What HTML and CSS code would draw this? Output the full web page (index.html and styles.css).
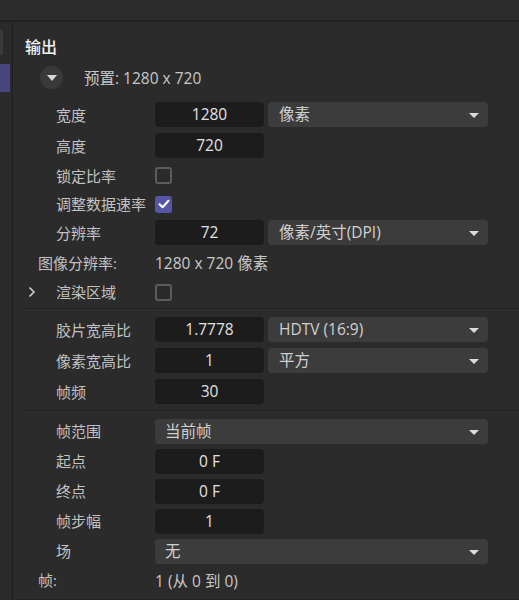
FILE: index.html
```html
<!DOCTYPE html>
<html lang="zh-CN">
<head>
<meta charset="utf-8">
<title>输出</title>
<link rel="stylesheet" href="styles.css">
</head>
<body>
<div class="app">
  <div class="topbar"></div>
  <div class="body">
    <aside class="rail">
      <div class="rail-tab"></div>
      <div class="rail-tab active"></div>
    </aside>
    <main class="panel">
      <h2 class="title">输出</h2>
      <div class="preset">
        <span class="disc"><svg width="10" height="6" viewBox="0 0 10 6"><path d="M0 0H10L5 6Z" fill="#d8d8d8"/></svg></span>
        <span class="preset-text">预置: 1280 x 720</span>
      </div>

      <div class="rows first">
        <div class="row h31"><span class="label">宽度</span><span class="field">1280</span><span class="select">像素<i class="caret"></i></span></div>
        <div class="row h31"><span class="label">高度</span><span class="field">720</span></div>
        <div class="row h29"><span class="label">锁定比率</span><span class="check"></span></div>
        <div class="row h28"><span class="label">调整数据速率</span><span class="check on"><svg width="12" height="10" viewBox="0 0 12 10"><path d="M1.5 5.2L4.6 8.2L10.5 1.8" fill="none" stroke="#fff" stroke-width="2" stroke-linecap="round" stroke-linejoin="round"/></svg></span></div>
        <div class="row h29"><span class="label">分辨率</span><span class="field">72</span><span class="select">像素/英寸(DPI)<i class="caret"></i></span></div>
        <div class="row h31 info"><span class="label">图像分辨率:</span><span class="value">1280 x 720 像素</span></div>
        <div class="row h28"><span class="label tree"><svg class="chev" width="8" height="12" viewBox="0 0 8 12"><path d="M1.5 1.5L6 6L1.5 10.5" fill="none" stroke="#cfcfcf" stroke-width="1.6"/></svg>渲染区域</span><span class="check"></span></div>
      </div>

      <div class="sep"></div>

      <div class="rows">
        <div class="row h31"><span class="label">胶片宽高比</span><span class="field">1.7778</span><span class="select">HDTV (16:9)<i class="caret"></i></span></div>
        <div class="row h31"><span class="label">像素宽高比</span><span class="field">1</span><span class="select">平方<i class="caret"></i></span></div>
        <div class="row h31"><span class="label">帧频</span><span class="field">30</span></div>
      </div>

      <div class="sep sep2"></div>

      <div class="rows">
        <div class="row h30"><span class="label">帧范围</span><span class="select wide">当前帧<i class="caret"></i></span></div>
        <div class="row h30"><span class="label">起点</span><span class="field">0 F</span></div>
        <div class="row h30"><span class="label">终点</span><span class="field">0 F</span></div>
        <div class="row h30"><span class="label">帧步幅</span><span class="field">1</span></div>
        <div class="row h30"><span class="label">场</span><span class="select wide">无<i class="caret"></i></span></div>
        <div class="row h28 info"><span class="label">帧:</span><span class="value">1 (从 0 到 0)</span></div>
      </div>
    </main>
  </div>
</div>
</body>
</html>
```

FILE: styles.css
```css
html, body {
  margin: 0;
  padding: 0;
  background: #2b2b2b;
}

body {
  font-family: "Open Sans", "Noto Sans CJK SC", sans-serif;
  font-size: 15px;
  color: #c4c4c4;
}

.app {
  width: 519px;
  height: 600px;
  display: flex;
  flex-direction: column;
  overflow: hidden;
}

.topbar {
  height: 20px;
  background: #2c2c2c;
  border-bottom: 2px solid #222222;
  flex: none;
}

.body {
  flex: 1;
  display: flex;
}

/* left tab rail */
.rail {
  width: 12px;
  border-right: 1px solid #1f1f1f;
  background: #2a2a2a;
  display: flex;
  flex-direction: column;
  padding-top: 8px;
  gap: 9px;
}

.rail-tab {
  width: 3px;
  height: 25px;
  background: #393939;
}

.rail-tab.active {
  width: 10px;
  height: 28px;
  background: #46467c;
}

.panel {
  flex: 1;
  display: flex;
  flex-direction: column;
  border-bottom: 1px solid #232323;
}

.title {
  margin: 15px 0 0 12px;
  font-size: 16px;
  line-height: 20px;
  font-weight: 500;
  color: #f2f2f2;
}

.preset {
  margin: 8px 0 0 27px;
  height: 24px;
  display: flex;
  align-items: center;
  gap: 21px;
}

.disc {
  width: 23px;
  height: 23px;
  border-radius: 50%;
  background: #393939;
  display: flex;
  align-items: center;
  justify-content: center;
}

.disc svg {
  margin-top: 1px;
}

.preset-text {
  color: #c8c8c8;
  font-size: 15.5px;
}

.rows {
  display: flex;
  flex-direction: column;
}

.rows.first {
  margin-top: 10px;
}

.row {
  display: grid;
  grid-template-columns: 138px 109px 220px;
  column-gap: 4px;
  align-items: center;
}

.h31 { height: 31px; }
.h30 { height: 30px; }
.h29 { height: 29px; }
.h28 { height: 28px; }

.label {
  padding-left: 43px;
  white-space: nowrap;
  color: #c2c2c2;
  line-height: 20px;
}

.label.tree {
  padding-left: 15px;
  display: flex;
  align-items: center;
}

.chev {
  width: 8px;
  margin-right: 20px;
}

.info .label {
  padding-left: 25px;
}

.value {
  grid-column: 2 / 4;
  color: #c8c8c8;
  white-space: nowrap;
  font-size: 15.5px;
}

.field {
  height: 25px;
  border-radius: 4px;
  background: #1c1c1c;
  color: #e2e2e2;
  text-align: center;
  line-height: 25px;
  font-size: 15.5px;
}

.select {
  position: relative;
  height: 25px;
  border-radius: 4px;
  background: #3c3c3c;
  color: #d0d0d0;
  line-height: 25px;
  padding-left: 11px;
  font-size: 15.5px;
}

.select.wide {
  grid-column: 2 / 4;
  padding-left: 10px;
}

.caret {
  position: absolute;
  right: 9px;
  top: 11px;
  width: 0;
  height: 0;
  border-left: 5px solid transparent;
  border-right: 5px solid transparent;
  border-top: 5px solid #dcdcdc;
}

.check {
  width: 13px;
  height: 13px;
  border: 2px solid #5c5c5c;
  border-radius: 3px;
}

.check.on {
  width: 17px;
  height: 17px;
  border: none;
  background: #5656a6;
  display: flex;
  align-items: center;
  justify-content: center;
}

.sep {
  margin: 2px 0 5px 9px;
  height: 1px;
  background: #202020;
  box-shadow: 0 1px 0 #333333;
}

.sep2 {
  margin-top: 3px;
  margin-bottom: 5px;
}
```
